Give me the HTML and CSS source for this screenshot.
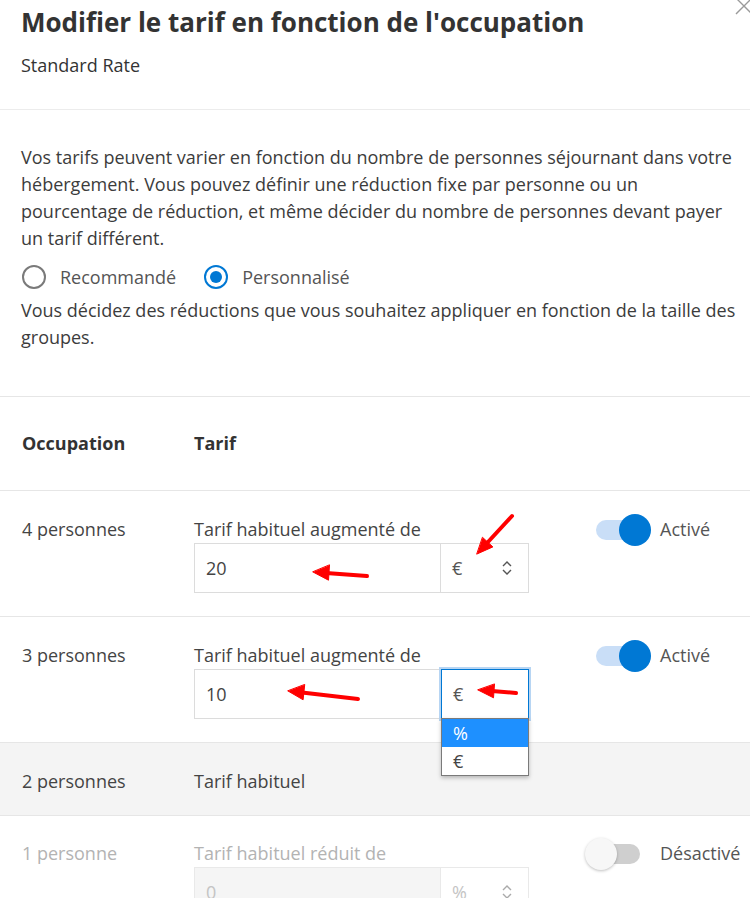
FILE: index.html
```html
<!DOCTYPE html>
<html lang="fr">
<head>
<meta charset="utf-8">
<title>Modifier le tarif en fonction de l'occupation</title>
<link rel="stylesheet" href="styles.css">
</head>
<body>
<div class="dialog">
  <header class="head">
    <h1 class="title">Modifier le tarif en fonction de l'occupation</h1>
    <p class="subtitle">Standard Rate</p>
    <button class="close" aria-label="Fermer">
      <svg viewBox="0 0 20 20" width="20" height="20"><path d="M2 2 L18 18 M18 2 L2 18" stroke="#9a9a9a" stroke-width="1.4" fill="none"/></svg>
    </button>
  </header>

  <section class="intro">
    <p class="text">Vos tarifs peuvent varier en fonction du nombre de personnes séjournant dans votre hébergement. Vous pouvez définir une réduction fixe par personne ou un<br>pourcentage de réduction, et même décider du nombre de personnes devant payer<br>un tarif différent.</p>
    <div class="radios">
      <label class="radio"><span class="dot"></span>Recommandé</label>
      <label class="radio checked"><span class="dot"></span>Personnalisé</label>
    </div>
    <p class="text">Vous décidez des réductions que vous souhaitez appliquer en fonction de la taille des groupes.</p>
  </section>

  <div class="table">
    <div class="row row-head">
      <div class="c-occ">Occupation</div>
      <div class="c-tarif">Tarif</div>
    </div>

    <div class="row">
      <div class="c-occ">4 personnes</div>
      <div class="c-tarif">
        <div class="lbl">Tarif habituel augmenté de</div>
        <div class="group">
          <div class="inp">20</div>
          <div class="sel"><span>€</span>
            <svg class="chev" viewBox="0 0 12 18" width="12" height="18"><path d="M2 7 L6 3 L10 7 M2 11 L6 15 L10 11" stroke="#555" stroke-width="1.4" fill="none"/></svg>
          </div>
        </div>
      </div>
      <div class="c-tog"><span class="track on"><span class="knob"></span></span><span class="tlabel">Activé</span></div>
    </div>

    <div class="row">
      <div class="c-occ">3 personnes</div>
      <div class="c-tarif">
        <div class="lbl">Tarif habituel augmenté de</div>
        <div class="group">
          <div class="inp">10</div>
          <div class="sel focus"><span>€</span>
            <ul class="menu">
              <li class="opt active">%</li>
              <li class="opt">€</li>
            </ul>
          </div>
        </div>
      </div>
      <div class="c-tog"><span class="track on"><span class="knob"></span></span><span class="tlabel">Activé</span></div>
    </div>

    <div class="row row-grey">
      <div class="c-occ">2 personnes</div>
      <div class="c-tarif">Tarif habituel</div>
    </div>

    <div class="row row-off">
      <div class="c-occ">1 personne</div>
      <div class="c-tarif">
        <div class="lbl">Tarif habituel réduit de</div>
        <div class="group">
          <div class="inp">0</div>
          <div class="sel"><span>%</span>
            <svg class="chev" viewBox="0 0 12 18" width="12" height="18"><path d="M2 7 L6 3 L10 7 M2 11 L6 15 L10 11" stroke="#aaa" stroke-width="1.4" fill="none"/></svg>
          </div>
        </div>
      </div>
      <div class="c-tog"><span class="track off"><span class="knob"></span></span><span class="tlabel">Désactivé</span></div>
    </div>
  </div>

  <svg class="annot" viewBox="0 0 750 898" width="750" height="898">
    <g fill="#f00" stroke="#f00" stroke-linecap="round">
      <line x1="512" y1="516" x2="488" y2="542" stroke-width="4"/>
      <polygon points="477,554 492.9,546.9 482.7,537.5" stroke-width="1"/>
      <line x1="367" y1="576" x2="326" y2="573" stroke-width="4"/>
      <polygon points="313,572 328.5,580.2 329.5,565.2" stroke-width="1"/>
      <line x1="358" y1="699" x2="302" y2="692.6" stroke-width="4"/>
      <polygon points="288,691 303.1,699.8 304.7,684.8" stroke-width="1"/>
      <line x1="516" y1="693" x2="492" y2="691" stroke-width="4"/>
      <polygon points="478,690 493.5,697.8 494.5,684.3" stroke-width="1"/>
    </g>
  </svg>
</div>
</body>
</html>
```

FILE: styles.css
```css
* { box-sizing: border-box; }
html, body { margin: 0; padding: 0; background: #fff; }
body {
  font-family: "Open Sans", "Noto Sans", sans-serif;
  color: #3c3c3c;
  font-size: 18px;
  line-height: 27px;
  width: 750px;
  height: 898px;
  overflow: hidden;
}
.dialog { position: relative; width: 750px; }

.head {
  position: relative;
  padding: 4px 21px 0;
  height: 110px;
  border-bottom: 1px solid #ececec;
}
.title {
  margin: 0;
  font-size: 26px;
  line-height: 36px;
  font-weight: 700;
  color: #333;
}
.subtitle { margin: 12px 0 0; color: #333; }
.close {
  position: absolute;
  top: -4px;
  right: -4px;
  border: 0;
  background: none;
  padding: 0;
  width: 20px;
  height: 20px;
}
.close svg { display: block; }

.intro {
  padding: 34px 0 45px 21px;
  border-bottom: 1px solid #e6e6e6;
}
.text { margin: 0; }
.radios {
  display: flex;
  gap: 27px;
  margin: 10px 0 5px;
  height: 30px;
  align-items: center;
}
.radio {
  display: flex;
  align-items: center;
  gap: 14px;
  color: #555;
  padding-left: 1px;
}
.dot {
  width: 24px;
  height: 24px;
  border-radius: 50%;
  border: 2px solid #7a7a7a;
  display: inline-flex;
  align-items: center;
  justify-content: center;
}
.radio.checked .dot { border-color: #0078d4; }
.radio.checked .dot::after {
  content: "";
  width: 12px;
  height: 12px;
  border-radius: 50%;
  background: #0078d4;
}

.row {
  display: grid;
  grid-template-columns: 172px 402px 1fr;
  padding: 25px 0 23px 22px;
  border-bottom: 1px solid #e6e6e6;
  color: #444;
}
.row-head {
  padding: 0 0 0 22px;
  height: 94px;
  align-items: center;
  font-weight: 700;
  color: #333;
}
.row-grey { background: #f4f4f4; padding-bottom: 20px; }
.row-off { color: #b3b3b3; border-bottom: 0; padding-top: 24px; }

.group { display: flex; height: 50px; }
.inp {
  width: 247px;
  border: 1px solid #dcdcdc;
  padding: 11px 11px;
  color: #444;
}
.sel {
  position: relative;
  width: 88px;
  border: 1px solid #dcdcdc;
  border-left: 0;
  padding: 11px 11px;
  color: #555;
  display: flex;
  justify-content: space-between;
  align-items: center;
}
.sel span { align-self: flex-start; }
.chev { margin-right: 4px; }
.sel.focus {
  border: 1px solid #0078d4;
  box-shadow: 0 0 0 2px #b7d5f3;
}
.menu {
  position: absolute;
  top: 100%;
  left: -1px;
  width: 88px;
  margin: 0;
  padding: 0;
  list-style: none;
  background: #fff;
  border: 1px solid #7a7a7a;
  box-shadow: 0 2px 4px rgba(0,0,0,0.25);
  z-index: 2;
}
.opt { height: 28px; line-height: 28px; padding-left: 11px; color: #444; }
.opt.active { background: #1e90ff; color: #fff; }

.row-off .inp, .row-off .sel { background: #f5f5f5; border-color: #e9e9e9; color: #c4c4c4; }
.row-off .sel { background: #fff; }

.c-tog {
  display: flex;
  align-items: center;
  height: 27px;
  gap: 20px;
}
.track {
  position: relative;
  width: 44px;
  height: 20px;
  border-radius: 10px;
  background: #c9def7;
}
.track.off { background: #cfcfcf; }
.knob {
  position: absolute;
  top: -6px;
  width: 32px;
  height: 32px;
  border-radius: 50%;
}
.track.on .knob { right: -11px; background: #0078d4; }
.track.off .knob { left: -11px; background: #f7f7f7; box-shadow: 0 1px 3px rgba(0,0,0,0.25); }
.tlabel { color: #555; }

.annot {
  position: absolute;
  top: 0;
  left: 0;
  pointer-events: none;
  z-index: 5;
}
```
